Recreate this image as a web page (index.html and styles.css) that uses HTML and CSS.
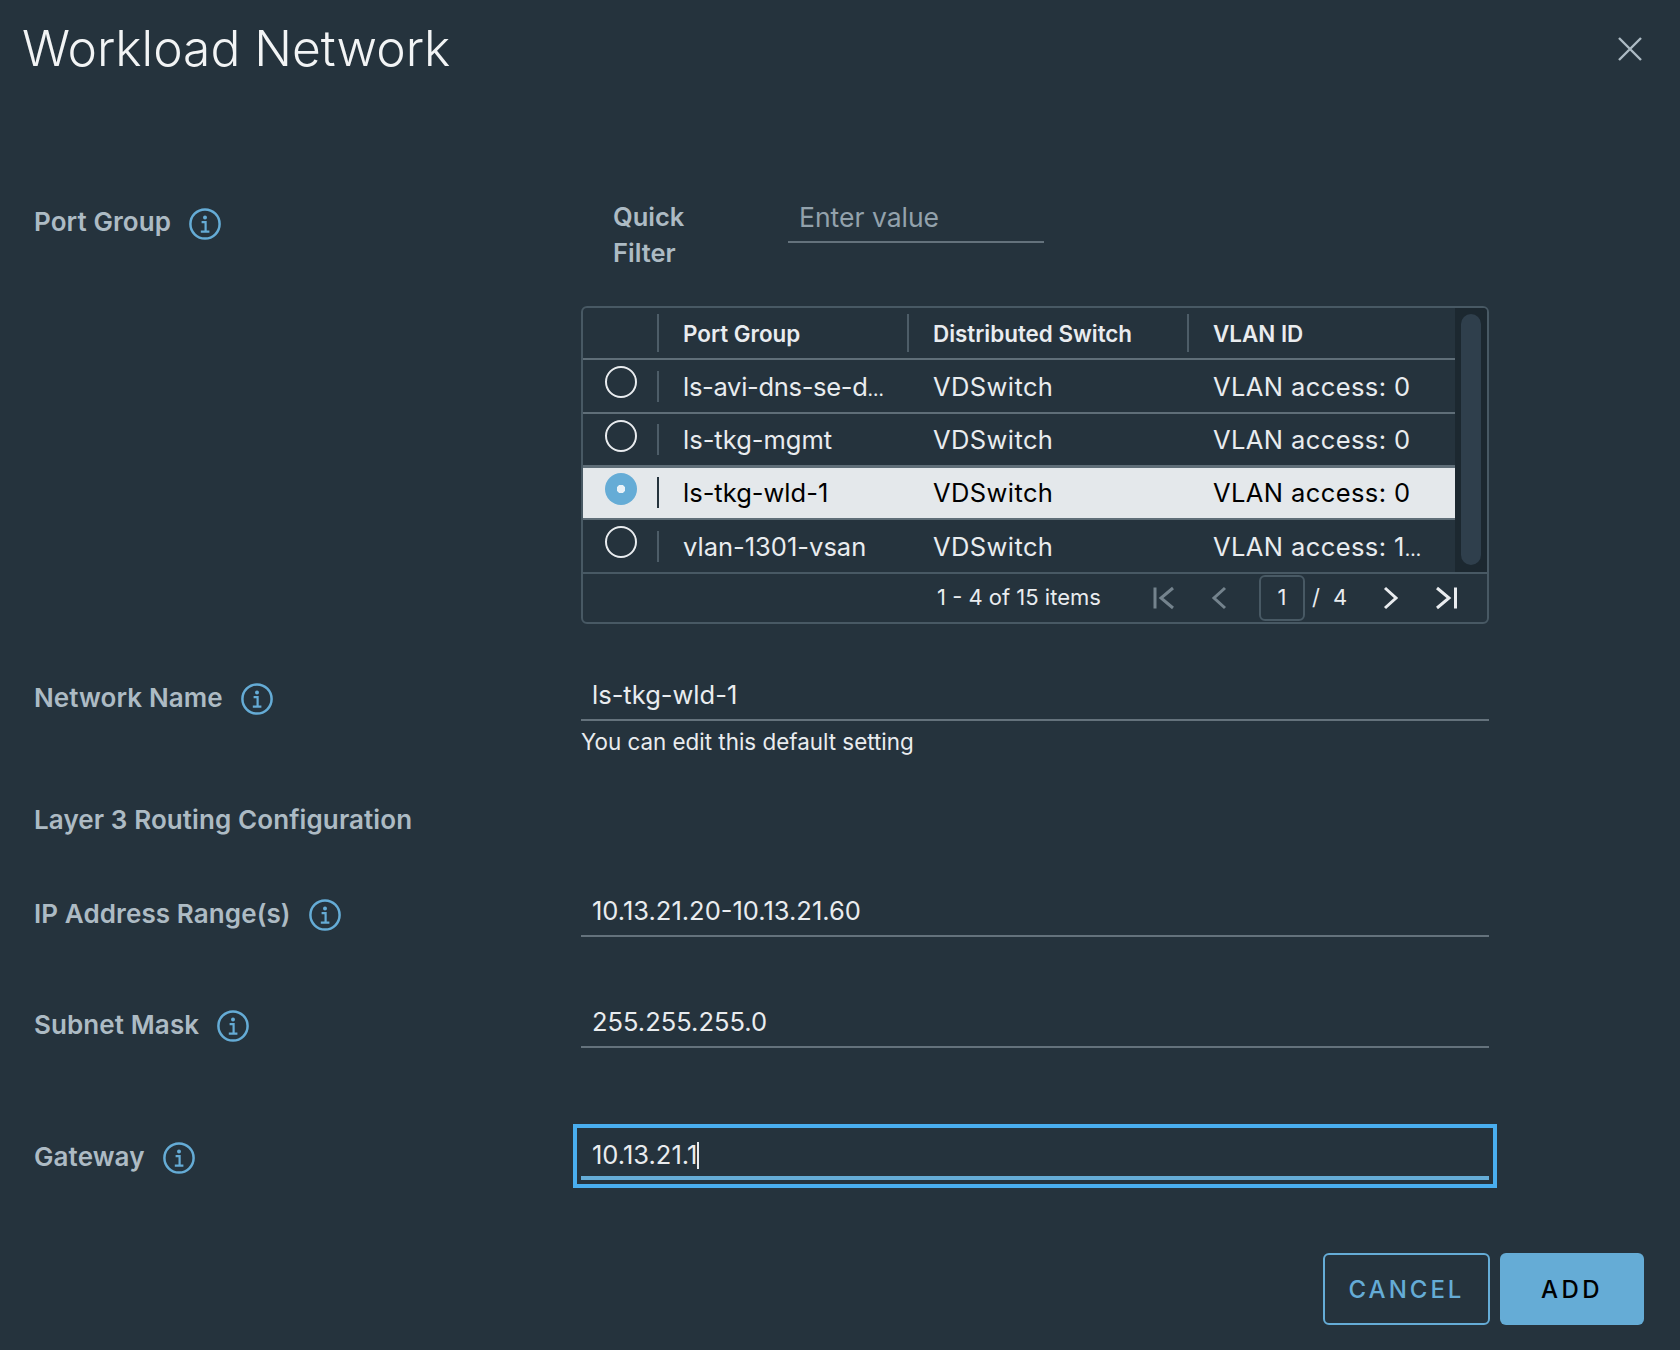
FILE: index.html
```html
<!DOCTYPE html>
<html lang="en">
<head>
  <meta charset="UTF-8" />
  <title>Workload Network</title>
  <link rel="stylesheet" href="styles.css">
</head>
<body>

<svg class="sprite" width="0" height="0">
  <symbol id="info" viewBox="0 0 32 32">
    <circle cx="16" cy="16" r="14.6" fill="none" stroke="currentColor" stroke-width="2.5"/>
    <circle cx="16" cy="9.6" r="2" fill="currentColor"/>
    <path d="M12.6 14.2h4v9.4M11.8 23.6h8.6" fill="none" stroke="currentColor" stroke-width="2.2"/>
  </symbol>
</svg>

<div class="dialog">
  <header class="top">
    <h1>Workload Network</h1>
    <svg class="close" width="26" height="26" viewBox="0 0 26 26">
      <path d="M2 2l22 22M24 2L2 24" stroke="#adbbc4" stroke-width="2.4" fill="none"/>
    </svg>
  </header>

  <!-- Port group -->
  <section class="row row-port">
    <div class="label">Port Group <svg class="info"><use href="#info"/></svg></div>
    <div>
      <div class="filter">
        <div class="filter-label">Quick<br>Filter</div>
        <div class="filter-input">Enter value</div>
      </div>

      <div class="grid">
        <div class="grid-main">
          <div class="grid-cols">
            <div class="grid-row head">
              <div class="cell cell-radio"></div>
              <div class="cell"><i class="sep"></i>Port Group</div>
              <div class="cell"><i class="sep"></i>Distributed Switch</div>
              <div class="cell"><i class="sep"></i>VLAN ID</div>
            </div>
            <div class="grid-row first">
              <div class="cell cell-radio"><span class="radio"></span></div>
              <div class="cell cell-clip"><i class="sep"></i><span>ls-avi-dns-se-d<span class="dots">…</span></span></div>
              <div class="cell cell-plain">VDSwitch</div>
              <div class="cell cell-plain">VLAN access: 0</div>
            </div>
            <div class="grid-row">
              <div class="cell cell-radio"><span class="radio"></span></div>
              <div class="cell"><i class="sep"></i>ls-tkg-mgmt</div>
              <div class="cell cell-plain">VDSwitch</div>
              <div class="cell cell-plain">VLAN access: 0</div>
            </div>
            <div class="grid-row selected">
              <div class="cell cell-radio"><span class="radio on"></span></div>
              <div class="cell"><i class="sep"></i>ls-tkg-wld-1</div>
              <div class="cell cell-plain">VDSwitch</div>
              <div class="cell cell-plain">VLAN access: 0</div>
            </div>
            <div class="grid-row last">
              <div class="cell cell-radio"><span class="radio"></span></div>
              <div class="cell"><i class="sep"></i>vlan-1301-vsan</div>
              <div class="cell cell-plain">VDSwitch</div>
              <div class="cell cell-plain"><span>VLAN access: 1<span class="dots">…</span></span></div>
            </div>
          </div>
          <div class="scroll"><div class="thumb"></div></div>
        </div>

        <div class="grid-foot">
          <span class="count">1 - 4 of 15 items</span>
          <svg class="pg pg-first" width="24" height="24" viewBox="0 0 24 24">
            <path d="M3 1.500v21M21 2L9 12l12 10" fill="none" stroke="#74838d" stroke-width="3"/>
          </svg>
          <svg class="pg pg-prev" width="16" height="24" viewBox="0 0 16 24">
            <path d="M14 2L3 12l11 10" fill="none" stroke="#74838d" stroke-width="3"/>
          </svg>
          <span class="page">1</span>
          <span class="slash">/</span>
          <span class="total">4</span>
          <svg class="pg pg-next" width="16" height="24" viewBox="0 0 16 24">
            <path d="M2 2l11 10L2 22" fill="none" stroke="#e9ecef" stroke-width="3"/>
          </svg>
          <svg class="pg pg-last" width="22" height="24" viewBox="0 0 22 24">
            <path d="M1 2l12 10L1 22M19.500 1.500v21" fill="none" stroke="#e9ecef" stroke-width="3"/>
          </svg>
        </div>
      </div>
    </div>
  </section>

  <!-- Network name -->
  <section class="row row-name">
    <div class="label label-field">Network Name <svg class="info"><use href="#info"/></svg></div>
    <div>
      <div class="field">ls-tkg-wld-1</div>
      <div class="hint">You can edit this default setting</div>
    </div>
  </section>

  <div class="label subhead">Layer 3 Routing Configuration</div>

  <section class="row row-ip">
    <div class="label label-field">IP Address Range(s) <svg class="info"><use href="#info"/></svg></div>
    <div class="field">10.13.21.20-10.13.21.60</div>
  </section>

  <section class="row row-mask">
    <div class="label label-field">Subnet Mask <svg class="info"><use href="#info"/></svg></div>
    <div class="field">255.255.255.0</div>
  </section>

  <section class="row row-gateway">
    <div class="label label-gateway">Gateway <svg class="info"><use href="#info"/></svg></div>
    <div class="focus-ring">
      <div class="field field-focus">10.13.21.1<i class="caret"></i></div>
    </div>
  </section>

  <footer class="actions">
    <button class="btn btn-outline">CANCEL</button>
    <button class="btn btn-solid">ADD</button>
  </footer>
</div>

</body>
</html>
```

FILE: styles.css
```css
* {
  box-sizing: border-box;
}
body {
  margin: 0;
  background: #25333d;
  color: #e9ecef;
  font-family: Inter, "Noto Sans", sans-serif;
  font-size: 25.5px;
  overflow: hidden;
}
.sprite {
  display: block;
  height: 0;
}
.dialog {
  width: 1680px;
  height: 1350px;
}
.top {
  display: flex;
  justify-content: space-between;
  align-items: center;
  height: 98px;
  padding: 0 37px 0 22px;
}
h1 {
  margin: 0;
  font-size: 49.7px;
  font-weight: 300;
  line-height: 96px;
  height: 98px;
  color: #f2f4f5;
}

/* form rows */
.row {
  display: grid;
  grid-template-columns: 547px 908px;
  padding-left: 34px;
}
.row-port {
  margin-top: 104px;
}
.row-name {
  margin-top: 47px;
}
.row-ip {
  margin-top: 47px;
}
.row-mask {
  margin-top: 61px;
}
.row-gateway {
  margin-top: 76px;
}
.label {
  display: flex;
  align-items: center;
  gap: 18px;
  height: 40px;
  padding-bottom: 2px;
  font-size: 26px;
  font-weight: 600;
  letter-spacing: 0.1px;
  color: #adbbc4;
}
.label-field {
  margin-top: 7px;
}
.label-gateway {
  margin-top: 13px;
}
.subhead {
  margin: 43px 0 0 34px;
}
.info {
  width: 32px;
  height: 32px;
  margin-top: 4px;
  color: #65acd6;
}
.row-port .info {
  margin-top: 6px;
}

/* quick filter */
.filter {
  display: flex;
  padding-left: 32px;
  height: 68px;
}
.filter-label {
  width: 175px;
  margin-top: -3px;
  font-size: 25.5px;
  font-weight: 600;
  line-height: 36px;
  color: #adbbc4;
}
.filter-input {
  width: 256px;
  height: 41px;
  padding: 0 11px;
  border-bottom: 2px solid #64727c;
  font-size: 26.5px;
  line-height: 30px;
  color: #93a2ac;
}

/* port group table */
.grid {
  margin-top: 36px;
  height: 318px;
  border: 2px solid #485964;
  border-radius: 6px;
  overflow: hidden;
}
.grid-main {
  display: flex;
  height: 264px;
}
.grid-cols {
  flex: 1;
}
.grid-row {
  display: grid;
  grid-template-columns: 74px 250px 280px 1fr;
  height: 53px;
  border-bottom: 2px solid #5f6e78;
  font-size: 25.5px;
}
.grid-row.head {
  height: 52px;
  font-size: 22.4px;
  font-weight: 600;
}
.grid-row.first {
  height: 54px;
}
.grid-row.last {
  height: 52px;
  border-bottom: 0;
}
.grid-row.selected {
  background: #e4e8eb;
  color: #000;
  box-shadow: inset 0 1px 0 #5f6e78;
}
.cell {
  display: flex;
  align-items: center;
  white-space: nowrap;
  min-width: 0;
}
.cell-radio {
  padding: 0 0 8px 22px;
}
.cell-plain {
  padding-left: 26px;
  letter-spacing: 0.4px;
}
.cell-clip {
  letter-spacing: -0.3px;
}
.dots {
  font-size: 19px;
  letter-spacing: 0;
}
.sep {
  width: 2px;
  height: 31px;
  margin-right: 24px;
  background: #4d5d68;
}
.head .sep {
  height: 38px;
}
.selected .sep {
  background: #25333d;
}
.radio {
  width: 32px;
  height: 32px;
  border: 2px solid #e9ecef;
  border-radius: 50%;
}
.radio.on {
  border: 0;
  background: radial-gradient(circle, #e9f2f8 0 4px, #65acd6 4.5px);
}
.scroll {
  width: 32px;
  padding: 6px;
  background: #1c2830;
}
.thumb {
  height: 251px;
  border-radius: 10px;
  background: #2f3f4c;
}
.grid-foot {
  display: flex;
  align-items: center;
  height: 50px;
  border-top: 2px solid #485964;
  font-size: 22px;
  padding-left: 354px;
}
.count {
  width: 215px;
  padding-bottom: 2px;
}
.pg-prev {
  margin-left: 35px;
}
.pg-next {
  margin-left: 36px;
}
.pg-last {
  margin-left: 37px;
}
.page {
  width: 46px;
  height: 46px;
  margin-left: 32px;
  border: 2px solid #485964;
  border-radius: 6px;
  text-align: center;
  line-height: 40px;
}
.slash {
  margin-left: 7px;
  padding-bottom: 2px;
}
.total {
  margin-left: 13px;
  padding-bottom: 2px;
}

/* inputs */
.field {
  height: 50px;
  padding: 0 11px;
  border-bottom: 2px solid #64727c;
  line-height: 48px;
}
.hint {
  margin-top: 6px;
  font-size: 22.4px;
  line-height: 30px;
}
.focus-ring {
  width: 924px;
  height: 64px;
  margin-left: -8px;
  padding: 4px;
  border: 4px solid #49aeef;
}
.field-focus {
  height: 48px;
  border-bottom: 4px solid #65acd6;
  line-height: 46px;
}
.caret {
  display: inline-block;
  width: 2px;
  height: 27px;
  vertical-align: -5px;
  background: #e9ecef;
}

/* buttons */
.actions {
  display: flex;
  justify-content: flex-end;
  gap: 10px;
  margin-top: 65px;
  padding-right: 36px;
}
.btn {
  height: 72px;
  padding-top: 2px;
  border-radius: 6px;
  font-family: inherit;
  font-size: 24px;
  font-weight: 500;
  letter-spacing: 3px;
}
.btn-outline {
  width: 167px;
  background: transparent;
  border: 2px solid #65acd6;
  color: #65acd6;
}
.btn-solid {
  width: 144px;
  background: #65acd6;
  border: 0;
  color: #000;
  letter-spacing: 3.5px;
}
```
